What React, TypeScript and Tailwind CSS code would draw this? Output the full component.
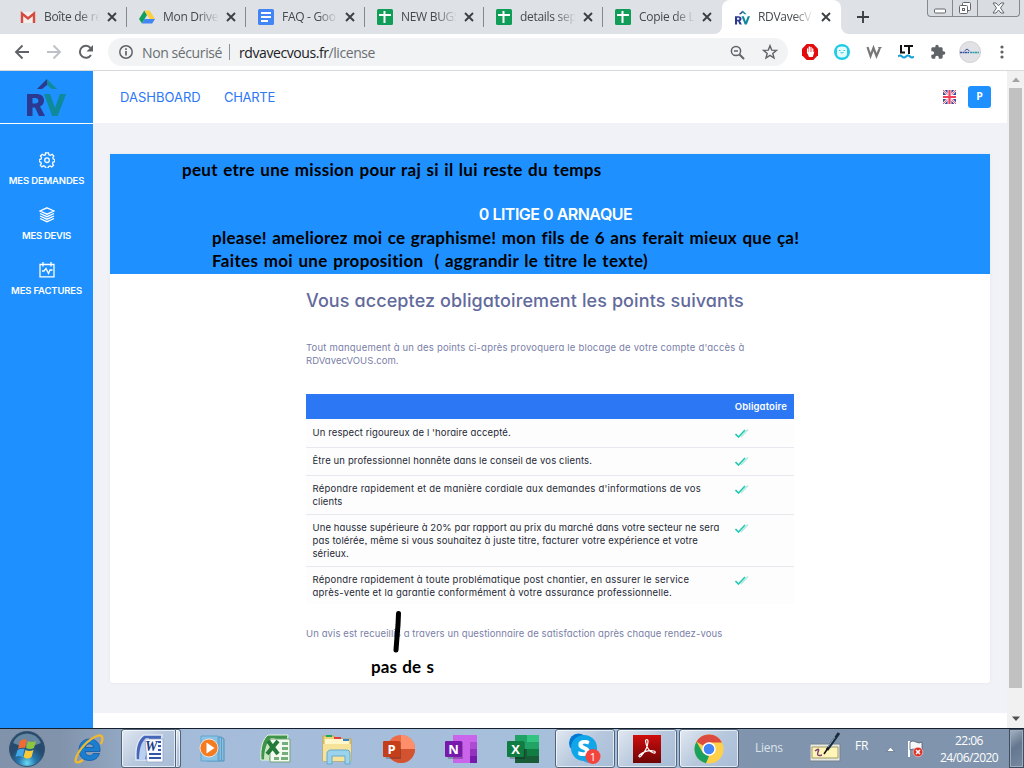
import React from 'react';

const UI = "font-['Open_Sans','Noto_Sans',sans-serif]";
const POP = "font-[Inter,sans-serif] [font-feature-settings:'cv11','ss03']";
const NOTE = "absolute whitespace-pre font-[Lato,sans-serif] font-bold text-black text-[17px] leading-[24px] [word-spacing:1px]";

function Gmail() {
  return (
    <svg width="16" height="16" viewBox="0 0 16 16">
      <path d="M1 3h14v11H1z" fill="#f1eeee" />
      <path d="M2 14V4.500l6 5 6-5V14" fill="none" stroke="#d54b3d" strokeWidth="2.400" />
    </svg>
  );
}
function Drive() {
  return (
    <svg width="16" height="16" viewBox="0 0 16 16">
      <path d="M5.300 1.500 8 6 3 14.500 0 10z" fill="#11a05c" />
      <path d="M5.300 1.500h5.400L16 10h-5.300z" fill="#ffcd40" />
      <path d="M5.600 10H16l-2.800 4.500H3z" fill="#4285f4" />
    </svg>
  );
}
function Docs() {
  return (
    <svg width="16" height="16" viewBox="0 0 16 16">
      <rect width="16" height="16" rx="1.500" fill="#4285f4" />
      <path d="M3 4h10M3 8h10M3 12h7" stroke="#fff" strokeWidth="2" />
    </svg>
  );
}
function Sheets() {
  return (
    <svg width="16" height="16" viewBox="0 0 16 16">
      <rect width="16" height="16" rx="1.500" fill="#0f9d58" />
      <path d="M2 6h12M7.500 2v12" stroke="#fff" strokeWidth="2" />
    </svg>
  );
}
function RV({ w, h }: { w: number; h: number }) {
  return (
    <svg width={w} height={h} viewBox="0 0 39 37">
      <path d="M20 0 10 10h5l5-4z" fill="#2b3990" />
      <path d="M20 0l10 10h-5l-5-4z" fill="#0e8a9a" />
      <path fillRule="evenodd" d="M0 15h9c5.500 0 8 2.600 8 6.500 0 3-1.500 5-4 6l5 9.500h-6l-4-8.500H5.500V37H0zM5.500 19v5.500h2.700c2 0 3.200-1 3.200-2.800 0-1.700-1-2.700-3.200-2.700z" fill="#2b3990" />
      <path d="M17 15h6l5 14 5-14h6l-8.300 22h-5.500z" fill="#0e8a9a" />
    </svg>
  );
}

const tabs = [
  { icon: <Gmail />, label: 'Boîte de ré' },
  { icon: <Drive />, label: 'Mon Drive' },
  { icon: <Docs />, label: 'FAQ - Goo' },
  { icon: <Sheets />, label: 'NEW BUGS' },
  { icon: <Sheets />, label: 'details sep' },
  { icon: <Sheets />, label: 'Copie de L' },
];

function TabBody({ icon, label }: { icon: React.ReactNode; label: string }) {
  return (
    <>
      <span className="flex w-4 shrink-0 justify-center">{icon}</span>
      <span className="ml-2 w-[57px] shrink-0 whitespace-nowrap text-[12px] leading-5 tracking-[-0.3px] text-[#45494d] [mask-image:linear-gradient(90deg,#000_62%,transparent_98%)]">
        {label}
      </span>
      <svg className="ml-[6px] shrink-0" width="10" height="10" viewBox="0 0 10 10">
        <path d="M1 1l8 8M9 1 1 9" stroke="#3c4043" strokeWidth="1.900" />
      </svg>
    </>
  );
}

function TabStrip() {
  return (
    <div className="flex h-[34px] bg-white">
      <div className="flex w-[722px] rounded-br-lg bg-[#dee1e6] pl-2">
        {tabs.map((t, i) => (
          <div key={i} className="flex w-[119px] shrink-0 items-center pl-3">
            <TabBody {...t} />
            {i < 5 && <span className="ml-auto h-[20px] w-px bg-[#85888c]" />}
          </div>
        ))}
      </div>
      <div className="w-[119px] bg-[#dee1e6]">
        <div className="flex h-full items-center rounded-t-lg bg-white pl-3">
          <TabBody icon={<RV w={15} h={15} />} label="RDVavecV" />
        </div>
      </div>
      <div className="flex flex-1 rounded-bl-lg bg-[#dee1e6]">
        <div className="flex w-[86px] items-center pl-4">
          <svg width="12" height="12" viewBox="0 0 12 12">
            <path d="M6 0v12M0 6h12" stroke="#3c4043" strokeWidth="1.900" />
          </svg>
        </div>
        <div className="flex h-[17px] w-[93px] rounded-b-[4px] border border-t-0 border-[#85898f] bg-[#d9dce1]">
          <div className="flex w-[25px] items-end justify-center border-r border-[#85898f] pb-[2px]">
            <svg width="12" height="6" viewBox="0 0 12 6"><rect x=".5" y="1" width="11" height="4" rx="1" fill="#fff" stroke="#63676d" /></svg>
          </div>
          <div className="flex w-[25px] items-center justify-center border-r border-[#85898f]">
            <svg width="14" height="14" viewBox="0 0 14 14" fill="#fff" stroke="#63676d"><rect x="4.500" y="1.500" width="8" height="8" rx="1" /><rect x="1.500" y="4.500" width="8" height="8" rx="1" /><rect x="4.500" y="7.500" width="2" height="2" /></svg>
          </div>
          <div className="flex flex-1 items-center justify-center">
            <svg width="13" height="12" viewBox="0 0 13 12"><path d="M1 1h3l2.500 2.800L9 1h3L8.500 6 12 11H9L6.500 8 4 11H1l3.500-5z" fill="#fff" stroke="#63676d" /></svg>
          </div>
        </div>
      </div>
    </div>
  );
}

function Toolbar() {
  return (
    <div className="flex h-[37px] items-center border-b border-[#d8d9dc] bg-white">
      <svg className="ml-[14px]" width="16" height="16" viewBox="0 0 16 16" fill="none" stroke="#5f6368" strokeWidth="1.900"><path d="M15 8H2M8.500 1.500 2 8l6.500 6.500" /></svg>
      <svg className="ml-4" width="16" height="16" viewBox="0 0 16 16" fill="none" stroke="#bdc1c6" strokeWidth="1.900"><path d="M1 8h13M7.500 1.500 14 8l-6.500 6.500" /></svg>
      <svg className="ml-4" width="16" height="16" viewBox="0 0 16 16"><path d="M13 11A6 6 0 1 1 12.500 4" fill="none" stroke="#5f6368" strokeWidth="2" /><path d="M15 1v6.500H8.500z" fill="#5f6368" /></svg>
      <div className="ml-[14px] flex h-7 w-[680px] items-center rounded-full bg-[#f1f3f4]">
        <svg className="ml-[11px]" width="14" height="14" viewBox="0 0 14 14"><circle cx="7" cy="7" r="6.200" fill="none" stroke="#5f6368" strokeWidth="1.500" /><path d="M7 6v4.500M7 3.300V5" stroke="#5f6368" strokeWidth="1.700" /></svg>
        <span className="ml-[9px] w-[81px] whitespace-nowrap text-[14px] tracking-[-0.4px] text-[#6a6e72]">Non sécurisé</span>
        <span className="ml-[6px] h-4 w-px bg-[#8d9094]" />
        <span className="ml-[9px] whitespace-nowrap text-[14px] tracking-[-0.42px] text-[#6a6e72]"><span className="text-[#202124]">rdvavecvous.fr</span>/license</span>
        <svg className="ml-auto" width="15" height="15" viewBox="0 0 15 15" fill="none" stroke="#5f6368" strokeWidth="1.500"><circle cx="6" cy="6" r="4.600" /><path d="M9.500 9.500 14 14" strokeWidth="2" /><path d="M4 6h4" /></svg>
        <svg className="ml-[17px] mr-[10px]" width="16" height="16" viewBox="0 0 16 16"><path d="m8 1.700 1.700 4.400 4.700.3-3.600 3 1.200 4.600L8 11.400 4 14l1.200-4.600-3.600-3 4.700-.3z" fill="none" stroke="#5f6368" strokeWidth="1.400" /></svg>
      </div>
      <svg className="ml-[14px]" width="16" height="16" viewBox="0 0 16 16"><path d="M4.700 0h6.600L16 4.700v6.600L11.300 16H4.700L0 11.300V4.700z" fill="#e30b0b" /><path d="M5.600 9V5M7.300 8V3M9 8V3.500M10.700 9V5" stroke="#fff" strokeWidth="1.300" strokeLinecap="round" /><path d="M4.900 8h6.500l1-.5-1.600 5.500H7z" fill="#fff" /></svg>
      <svg className="ml-4" width="16" height="16" viewBox="0 0 16 16"><circle cx="8" cy="8" r="8" fill="#20cce8" /><path d="M3 5.500C3 3.500 5 2.500 8 2.500s5 1 5 3v4.500c0 2-2 3.500-5 3.500S3 12 3 10z" fill="#e7fbfd" /><path d="M5 6.500h1.500M9.500 6.500H11M6.500 8.500q1.500 1 3 0" fill="none" stroke="#20cce8" /></svg>
      <svg className="ml-4" width="16" height="16" viewBox="0 0 16 16"><path d="M1.500 3 4.500 12 7.500 4l3 8 3-7" fill="none" stroke="#777" strokeWidth="2.200" /><path d="M12 3h4l-2.500 3z" fill="#777" /></svg>
      <svg className="ml-4" width="16" height="16" viewBox="0 0 16 16"><path d="M3 1v7.500h4M6 2h9M11 2v8" fill="none" stroke="#111" strokeWidth="2" /><path d="M0 12.500q2-2 4 0t4 0 4 0 4 0" fill="none" stroke="#159fd7" strokeWidth="2" /></svg>
      <svg className="ml-4" width="16" height="16" viewBox="0 0 24 24" fill="#5f6368"><path d="M20.500 11H19V7c0-1.100-.9-2-2-2h-4V3.500a2.500 2.500 0 0 0-5 0V5H4c-1.100 0-2 .9-2 2v3.800h1.500a2.700 2.700 0 0 1 0 5.400H2V20c0 1.100.9 2 2 2h3.800v-1.500a2.700 2.700 0 0 1 5.400 0V22H17c1.100 0 2-.9 2-2v-4h1.500a2.500 2.500 0 0 0 0-5z" /></svg>
      <svg className="ml-[13px]" width="22" height="22" viewBox="0 0 22 22"><circle cx="11" cy="11" r="10.500" fill="#e1e1e6" stroke="#cfcfd5" /><path d="M1 11.500h9" stroke="#3550a0" strokeWidth="1.500" strokeDasharray="2 .5" /><path d="M11 11.500h9" stroke="#239baa" strokeWidth="1.500" strokeDasharray="2 .5" /><path d="M5.500 10 8 8l2.500 2" fill="none" stroke="#3550a0" /></svg>
      <svg className="ml-[19px]" width="4" height="14" viewBox="0 0 4 14" fill="#5f6368"><circle cx="2" cy="2" r="1.600" /><circle cx="2" cy="7" r="1.600" /><circle cx="2" cy="12" r="1.600" /></svg>
    </div>
  );
}

function SideItem({ label, tracking, children }: { label: string; tracking: string; children: React.ReactNode }) {
  return (
    <div className="flex h-[55px] flex-col items-center">
      <svg width="16" height="16" viewBox="0 0 16 16" fill="none" stroke="#fff" strokeWidth="1.300">{children}</svg>
      <span className={`mt-[7px] whitespace-nowrap text-[9.5px] font-semibold leading-3 text-white ${tracking} ${POP}`}>{label}</span>
    </div>
  );
}

function Sidebar() {
  return (
    <aside className="flex w-[93px] shrink-0 flex-col bg-[#1e90ff]">
      <div className="flex h-[53px] justify-center border-b border-white pt-[8px]"><RV w={39} h={37} /></div>
      <nav className="flex flex-col pt-[28px]">
        <SideItem label="MES DEMANDES" tracking="tracking-[-0.16px]">
          <path d="M6.500.8h3l.4 2 1.500.6 1.800-1.100 1.600 1.700-1 1.700.5 1.400 1.500.5v2l-1.800.5-.5 1.500 1 1.700-1.700 1.600-1.700-1-1.600.6-.4 1.700h-2.500l-.5-1.800-1.500-.6-1.700 1.100-1.600-1.700 1-1.700-.6-1.400-1.500-.5v-2l1.800-.5.5-1.500-1-1.700 1.700-1.600 1.700 1 1.600-.6z" />
          <circle cx="8" cy="8.200" r="2.300" />
        </SideItem>
        <SideItem label="MES DEVIS" tracking="tracking-[-0.28px]">
          <path d="M8 .8 15 4 8 7.200 1 4zM1 6.500l7 3.200 7-3.200M1 9l7 3.200L15 9M1 11.500l7 3.200 7-3.200" />
        </SideItem>
        <SideItem label="MES FACTURES" tracking="tracking-[-0.15px]">
          <path d="M1 2.500h14v12.300H1zM4 0v4.500M12 0v4.500M3 9h2l2-2.500 2.500 5L11 8h2.500" />
        </SideItem>
      </nav>
    </aside>
  );
}

function Header() {
  return (
    <header className="flex h-[52px] shrink-0 items-center bg-white">
      <span className={`ml-[27px] mt-[2px] w-[82px] whitespace-nowrap text-[13px] tracking-[0px] text-[#2c77f4] ${POP}`}>DASHBOARD</span>
      <span className={`ml-[22px] mt-[2px] whitespace-nowrap text-[13px] tracking-[-0.3px] text-[#2c77f4] ${POP}`}>CHARTE</span>
      <svg className="ml-auto" width="13" height="14" viewBox="0 0 13 14"><path fill="#3f4a9c" d="M0 0h13v14H0z" /><path d="M0 0l13 14M13 0 0 14" stroke="#fff" strokeWidth="2.200" /><path d="M0 0l13 14M13 0 0 14" stroke="#e8506a" /><path d="M6.500 0v14M0 7h13" stroke="#fff" strokeWidth="3.800" /><path d="M6.500 0v14M0 7h13" stroke="#f0405a" strokeWidth="2.200" /></svg>
      <span className={`ml-3 mr-4 flex h-[22px] w-[23px] items-center justify-center rounded-[3px] bg-[#1e90ff] text-[10.5px] font-bold text-white ${UI}`}>P</span>
    </header>
  );
}

const rows = [
  { box: 'h-[29px] pt-[7px]', lines: [['Un respect rigoureux de l \'horaire accepté.', 'tracking-[0.12px]']] },
  { box: 'h-[28px] pt-[6px]', lines: [['Être un professionnel honnête dans le conseil de vos clients.', 'tracking-[0.13px]']] },
  { box: 'h-[39px] pt-[6px]', lines: [['Répondre rapidement et de manière cordiale aux demandes d\'informations de vos', 'tracking-[0.23px]'], ['clients', 'tracking-[0.1px]']] },
  { box: 'h-[52px] pt-[6px]', lines: [['Une hausse supérieure à 20% par rapport au prix du marché dans votre secteur ne sera', 'tracking-[0.1px]'], ['pas tolérée, même si vous souhaitez à juste titre, facturer votre expérience et votre', 'tracking-[0.145px]'], ['sérieux.', 'tracking-[0.1px]']] },
  { box: 'h-[37px] pt-[6px]', lines: [['Répondre rapidement à toute problématique post chantier, en assurer le service', 'tracking-[0.215px]'], ['après-vente et la garantie conformément à votre assurance professionnelle.', 'tracking-[0.215px]']] },
];

function Card() {
  return (
    <section className={`relative mx-[17px] mt-[31px] h-[529px] shrink-0 rounded-b-[3px] bg-white shadow-[0_0_4px_rgba(60,70,120,0.06)] ${POP}`}>
      <div className="flex h-[120px] justify-center bg-[#1e90ff] pt-[48px]">
        <h1 className="pl-[11px] text-[16px] font-semibold leading-[24px] tracking-[-0.5px] text-white">0 LITIGE 0 ARNAQUE</h1>
      </div>
      <div className="ml-[196px] w-[488px]">
        <h2 className="h-[28px] whitespace-nowrap pt-[14px] text-[18px] font-medium leading-[26px] tracking-[0.1px] text-[#626a9c]">Vous acceptez obligatoirement les points suivants</h2>
        <p className="mt-[39px] whitespace-nowrap text-[9.5px] leading-[13px] tracking-[0.2px] text-[#7a80a8]">Tout manquement à un des points ci-après provoquera le blocage de votre compte d'accès à<br /><span className="tracking-[0.05px]">RDVavecVOUS.com.</span></p>
        <div className="mt-[27px] flex h-[25px] items-center justify-end bg-[#2c77f4] pr-[7px] pt-[2px] text-[9.5px] font-semibold tracking-[0.13px] text-white">Obligatoire</div>
        {rows.map((r, i) => (
          <div key={i} className={`flex bg-[#fdfdfd] pl-[6.5px] ${r.box} ${i < 4 ? 'border-b border-[#e8e9ef]' : ''}`}>
            <div className="w-[422.5px] text-[9.5px] leading-[13px] text-[#252936]">
              {r.lines.map(([text, tracking]) => <div key={text} className={`whitespace-nowrap ${tracking}`}>{text}</div>)}
            </div>
            <svg className="mt-[3px]" width="14" height="9" viewBox="0 0 14 9" fill="none"><path d="m6 8 7-7.500" stroke="#aee7df" strokeWidth="1.300" /><path d="m.5 5 3 3L10 1" stroke="#22c9b3" strokeWidth="1.600" /></svg>
          </div>
        ))}
        <p className="mt-[23px] whitespace-nowrap text-[9.5px] leading-[13px] tracking-[0.105px] text-[#7a80a8]">Un avis est recueillis a travers un questionnaire de satisfaction après chaque rendez-vous</p>
      </div>
      <span className={`${NOTE} left-[72px] top-[4px] tracking-[0.29px]`}>peut etre une mission pour raj si il lui reste du temps</span>
      <span className={`${NOTE} left-[102px] top-[72px] tracking-[0.265px]`}>please! ameliorez moi ce graphisme! mon fils de 6 ans ferait mieux que ça!</span>
      <span className={`${NOTE} left-[102px] top-[95px] tracking-[0.33px]`}>{'Faites moi une proposition  ( aggrandir le titre le texte)'}</span>
      <span className={`${NOTE} left-[261px] top-[501px] tracking-[0.1px]`}>pas de s</span>
      <svg className="absolute left-[282px] top-[456px]" width="12" height="44" viewBox="0 0 12 44"><path d="M6.500 3.500 6 15 5 27l-1 13" fill="none" stroke="#000" strokeWidth="5" strokeLinecap="round" /></svg>
    </section>
  );
}

function Scrollbar() {
  return (
    <div className="flex w-[17px] shrink-0 flex-col items-center bg-[#f1f1f1]">
      <svg className="h-[17px]" width="8" height="17" viewBox="0 0 8 17"><path d="M0 11l4-4.500L8 11z" fill="#a3a3a3" /></svg>
      <div className="h-[600px] w-[13px] bg-[#c1c1c1]" />
      <svg className="mt-auto" width="8" height="18" viewBox="0 0 8 18"><path d="M0 6.500 4 11l4-4.500z" fill="#505050" /></svg>
    </div>
  );
}

function OfficeTile({ letter, dark, children }: { letter: string; dark: string; children: React.ReactNode }) {
  return (
    <svg width="34" height="30" viewBox="0 0 34 30">
      {children}
      <path d="M2 8h17v17H4z" fill="#000" opacity=".22" />
      <rect x="1" y="7" width="17" height="16" rx="1" fill={dark} />
      <text x="9.500" y="19.500" textAnchor="middle" fontFamily="Open Sans" fontWeight="700" fontSize="13" fill="#fff">{letter}</text>
    </svg>
  );
}

const apps: { open: boolean; stacked?: boolean; art: React.ReactNode }[] = [
  { open: false, art: (
    <svg width="34" height="34" viewBox="0 0 34 34"><path fillRule="evenodd" d="M17.500 7C11 7 7 12 7 18c0 6 4 10.500 10.500 10.500 5 0 8.500-2.500 10-7h-6.300c-.8 1.500-2 2.200-3.700 2.200-2.600 0-4.200-1.700-4.300-4.200H28C28.500 12 24.500 7 17.500 7zm-4.200 8.500c.4-2.300 2-3.600 4.200-3.600s3.900 1.300 4.200 3.600z" fill="#1a7fd0" stroke="#0b4f9c" strokeWidth=".7" /><path d="M29 12c3-7 1-10-4-8-8 3-18 13-21 22-2 6 3 5 7 2" fill="none" stroke="#f2b92c" strokeWidth="2.300" /></svg>
  ) },
  { open: true, stacked: true, art: (
    <svg width="34" height="34" viewBox="0 0 34 34"><path d="M4 28C3 15 6 7 12 3h18l-3 25z" fill="#4667b7" stroke="#dfe8f8" strokeWidth="1.500" /><path d="M7 28C7 18 9 10 14 6h3L13 28z" fill="#b9d0f1" /><path d="M13 7h18v23H15z" fill="#f8faff" stroke="#8fa2c5" strokeWidth=".7" /><text x="13" y="19" fontFamily="Liberation Serif" fontStyle="italic" fontWeight="700" fontSize="14" fill="#223b83">W</text><path d="M26 10h3M26 14h3M26 18h3M17 22h12M17 26h12" stroke="#3155a6" strokeWidth="2" /></svg>
  ) },
  { open: false, art: (
    <svg width="32" height="32" viewBox="0 0 32 32"><path d="M9 4h15l3 2v22H10z" fill="#8abede" stroke="#4f91bd" /><path d="M22 4v24M24.500 5v23" stroke="#5c9cc6" /><path d="M4 3h17v25H4z" fill="#8bc3e5" stroke="#65a5ce" /><circle cx="12" cy="15" r="9" fill="#f47b20" stroke="#fff" strokeWidth=".7" /><path d="M9.500 9.500v11l8-5.500z" fill="#fff" /></svg>
  ) },
  { open: false, art: (
    <svg width="34" height="34" viewBox="0 0 34 34"><path d="M3 28C2 15 5 7 10 3h20l-3 25z" fill="#3e9448" stroke="#e6f5e6" /><path d="M6 28C6 17 9 10 13 6h4l-6 22z" fill="#c9e6c2" /><path d="M12 7h20v23H12z" fill="#f3faf0" stroke="#6fa572" /><path d="m10 9 10 13M20 9 9 22" stroke="#237a39" strokeWidth="4" /><path d="M24 10h6v3h-6zm0 5h6v3h-6zm0 5h6v3h-6zM16 25h5v3h-5zm7 0h7v3h-7z" fill="#75ad7b" /></svg>
  ) },
  { open: false, art: (
    <svg width="34" height="34" viewBox="0 0 34 34"><path d="M3 4h11l2 3h15v22H3z" fill="#edd27a" stroke="#c3a34a" /><path d="M5 7h24v8H5z" fill="#fff6c9" /><path d="M6 4h6" stroke="#21a65b" strokeWidth="2" /><path d="M14 6h7" stroke="#e23d3d" strokeWidth="2" /><path d="M23 8h6" stroke="#3882d2" strokeWidth="2" /><path d="M3 12h28v17H3z" fill="#f7e29a" /><path d="M7 32V22c0-3 2-4 4-4h15c3 0 4 1 4 4v10h-5v-8H12v8z" fill="#9bd3ec" stroke="#64a8cc" /></svg>
  ) },
  { open: false, art: (
    <OfficeTile letter="P" dark="#c43e1c"><circle cx="19" cy="15" r="14" fill="#ed6c47" /><path d="M19 1a14 14 0 0 1 14 14H19z" fill="#ff8f6b" /><path d="M5 15h28a14 14 0 0 1-28 0z" fill="#d35230" /></OfficeTile>
  ) },
  { open: false, art: (
    <OfficeTile letter="N" dark="#7719aa"><path d="M9 1h24v28H9z" fill="#ca64ea" /><path d="M26 8h7v7h-7z" fill="#ae4bd5" /><path d="M26 15h7v7h-7z" fill="#9332bf" /><path d="M26 22h7v7h-7z" fill="#7719aa" /></OfficeTile>
  ) },
  { open: false, art: (
    <OfficeTile letter="X" dark="#107c41"><path d="M9 1h12v28H9z" fill="#21a366" /><path d="M21 1h12v7H21z" fill="#33c481" /><path d="M21 8h12v7H21z" fill="#21a366" /><path d="M9 15h12v7H9z" fill="#185c37" /><path d="M21 15h12v7H21z" fill="#107c41" /><path d="M9 22h24v7H9z" fill="#185c37" /></OfficeTile>
  ) },
  { open: true, art: (
    <svg width="34" height="34" viewBox="0 0 34 34"><circle cx="10.500" cy="11" r="9.500" fill="#0078d4" /><circle cx="21" cy="22" r="9" fill="#28a8ea" /><circle cx="16" cy="16" r="13" fill="#12a5e8" /><text x="15.500" y="24" textAnchor="middle" fontFamily="Open Sans" fontWeight="800" fontSize="22" fill="#fff">S</text><circle cx="25" cy="24.500" r="7.500" fill="#f4443e" /><text x="25" y="28.500" textAnchor="middle" fontFamily="Open Sans" fontSize="11" fill="#fff">1</text></svg>
  ) },
  { open: true, art: (
    <svg width="28" height="28" viewBox="0 0 28 28"><defs><linearGradient id="pdf" x2="0" y2="1"><stop offset="0" stopColor="#d00d0d" /><stop offset="1" stopColor="#6e0404" /></linearGradient></defs><path d="M0 0h28v28H0z" fill="url(#pdf)" /><path d="M12.500 6c0-2 3-2 2.500 1-.5 5-4 11-7 14-2 2-3 0-1-1.500 4-3 10-4.500 14-3.500 2 .5 1.500 2.500-.5 2C16 17 13 11 12.500 6z" fill="none" stroke="#fff" strokeWidth="1.200" /></svg>
  ) },
  { open: true, art: (
    <svg width="32" height="32" viewBox="0 0 32 32"><circle cx="16" cy="16" r="14.500" fill="#ffd04a" /><path d="M16 16 3.500 8.700A14.500 14.500 0 0 1 29 9.500H16z" fill="#dd4b3e" /><path d="M3.500 8.700 10 20l6 3-3 7.300A14.500 14.500 0 0 1 3.500 8.700z" fill="#1aa15f" /><circle cx="16" cy="16" r="6.800" fill="#fff" /><circle cx="16" cy="16" r="5.300" fill="#4285f4" /></svg>
  ) },
];

const TILE = 'border border-[#526479] bg-[linear-gradient(135deg,#e1e8f1,#b7c8dd_50%,#a7bcd6)] shadow-[inset_0_0_0_1px_rgba(255,255,255,0.65)]';

function Taskbar() {
  return (
    <footer className="flex h-[40px] shrink-0 border-t border-[#16202c] bg-[linear-gradient(90deg,#8193ab_0,#8193ab_60px,#a4bcd9_185px,#a7c0dc_670px,#8094ad_742px,#8094ad_100%)]">
      <div className="flex w-[59px] items-center pl-[8px]">
        <svg width="38" height="38" viewBox="0 0 38 38">
          <defs><radialGradient id="orb" cx=".5" cy=".9"><stop offset="0" stopColor="#69d9f4" /><stop offset=".5" stopColor="#2678ae" /><stop offset="1" stopColor="#254c6e" /></radialGradient></defs>
          <circle cx="19" cy="19" r="17.500" fill="url(#orb)" stroke="#38506b" />
          <path d="M5 13a15 15 0 0 1 28 0Q19 20 5 13z" fill="#9cb7cc" opacity=".55" />
          <path d="M12 11q4-3 7-1l-2 8q-4-1-7 1z" fill="#f06b32" /><path d="M20 11q4 2 8 0l-2 7q-4 2-8 0z" fill="#8bc63e" /><path d="M9.500 20q4-2 7-1l-2 8q-4-2-7 0z" fill="#43a7e5" /><path d="M17.500 20q4 2 8 0l-2 7q-4 3-8 0z" fill="#fbcb37" />
        </svg>
      </div>
      {apps.map((a, i) => (
        <div key={i} className="flex w-[62px] shrink-0 pr-[2px]">
          <div className={`flex h-full flex-1 items-center justify-center ${a.open ? TILE : ''} ${a.stacked ? 'rounded-l-[3px]' : a.open ? 'rounded-[3px]' : ''}`}>{a.art}</div>
          {a.stacked && <div className={`w-[5px] rounded-r-[3px] border-l-0 ${TILE}`} />}
        </div>
      ))}
      <div className={`flex flex-1 text-white ${UI}`}>
        <span className="ml-[14px] mt-[10px] w-[55px] text-[12px] leading-[18px] tracking-[-0.3px] text-[#dce3eb]">Liens</span>
        <svg className="mt-[3px]" width="32" height="32" viewBox="0 0 32 32"><path d="M0 12h30v17H0z" fill="#e7e9e5" stroke="#77818b" /><path d="M2 15h26v11H2z" fill="#fff5b8" stroke="#a59b65" /><path d="M5 19q5-4 3 1t4 3" fill="none" stroke="#7b3f75" strokeWidth="1.500" /><path d="M29 1 17 18" stroke="#182a3a" strokeWidth="3" /><path d="m18 16-4 6" stroke="#111" strokeWidth="1.500" /><path d="M25 5l-7 10" stroke="#84a8bd" /></svg>
        <span className="ml-[13px] mt-[8px] w-[31px] text-[12px] leading-[18px] tracking-[-0.3px]">FR</span>
        <svg className="mt-[17px]" width="9" height="6" viewBox="0 0 9 6"><path d="M.5 5.500 4.500 1l4 4.500z" fill="#fff" stroke="#4e6076" strokeWidth=".6" /></svg>
        <svg className="ml-[12px] mt-[11px]" width="18" height="18" viewBox="0 0 18 18"><path d="M2 1v16" stroke="#fff" strokeWidth="2" /><path d="M3 2q3-2 6 0t6 0v8q-3 2-6 0t-6 0z" fill="#f5f7f8" stroke="#46566a" strokeWidth=".7" /><circle cx="11" cy="12" r="4.800" fill="#dd3028" stroke="#fff" strokeWidth=".5" /><path d="m9 10 4 4m0-4-4 4" stroke="#fff" strokeWidth="1.500" /></svg>
        <div className="ml-auto mr-[9px] mt-[3px] flex w-[62px] flex-col items-center whitespace-nowrap text-[12px] leading-[17px] tracking-[-0.55px]"><span>22:06</span><span>24/06/2020</span></div>
        <div className="w-[15px] border border-[#3e4f63] bg-[linear-gradient(145deg,#a7b4c4,#64778f_45%,#75899f)] shadow-[inset_0_0_0_1px_#9dacbd]" />
      </div>
    </footer>
  );
}

export default function App() {
  return (
    <div className={`flex h-[768px] w-[1024px] flex-col overflow-hidden bg-white ${UI}`}>
      <TabStrip />
      <Toolbar />
      <div className="flex min-h-0 flex-1">
        <Sidebar />
        <main className="flex min-w-0 flex-1 flex-col">
          <Header />
          <div className="flex h-[590px] flex-col bg-[#f1f2f7]"><Card /></div>
        </main>
        <Scrollbar />
      </div>
      <Taskbar />
    </div>
  );
}
